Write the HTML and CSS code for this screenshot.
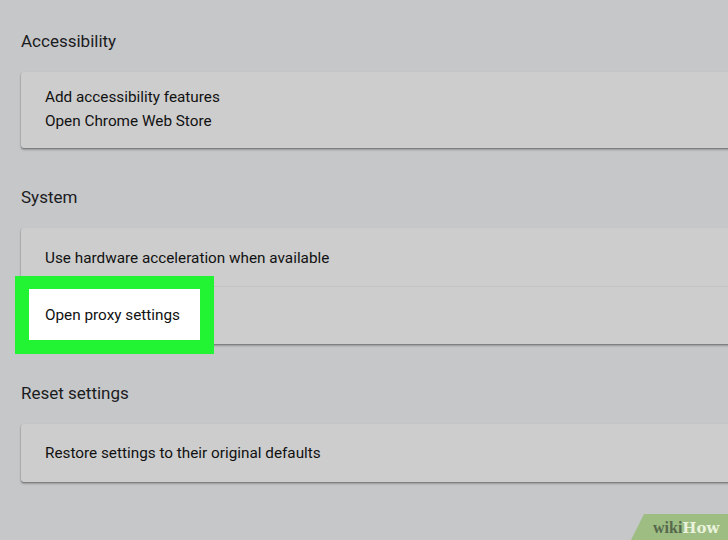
FILE: index.html
```html
<!DOCTYPE html>
<html>
<head>
<meta charset="utf-8">
<link rel="stylesheet" href="styles.css">
</head>
<body>
<main class="page">
  <h2 class="heading">Accessibility</h2>
  <section class="card">
    <div class="row row-double">
      <div class="line">Add accessibility features</div>
      <div class="line">Open Chrome Web Store</div>
    </div>
  </section>

  <h2 class="heading heading-next">System</h2>
  <section class="card">
    <div class="row row-first">Use hardware acceleration when available</div>
    <div class="row row-sep row-highlighted">
      <span class="row-label">Open proxy settings</span>
      <div class="highlight"><span class="highlight-label">Open proxy settings</span></div>
    </div>
  </section>

  <h2 class="heading heading-next">Reset settings</h2>
  <section class="card">
    <div class="row row-first row-last">Restore settings to their original defaults</div>
  </section>
</main>
<div class="wikihow"><span class="wiki">wiki</span><span class="how">How</span></div>
</body>
</html>
```

FILE: styles.css
```css
html, body {
  margin: 0;
  padding: 0;
}
body {
  background: #c6c7c9;
  font-family: Roboto, "Liberation Sans", Arial, sans-serif;
  width: 728px;
  height: 540px;
  overflow: hidden;
  position: relative;
}
.page {
  padding: 31px 0 0 21px;
  margin-right: -20px;
}
.heading {
  margin: 0 0 21px 0;
  font-size: 17px;
  font-weight: 400;
  line-height: 20px;
  color: #1b1c1e;
}
.heading-next {
  margin-top: 39px;
}
.card {
  background: #cdcdcd;
  border-radius: 3px;
  box-shadow: 0 1px 0 #808080, 0 2px 2px rgba(0,0,0,0.25), -1px 0 1px rgba(0,0,0,0.08);
}
.row {
  font-size: 15.3px;
  color: #111111;
  padding-left: 24px;
  line-height: 20px;
}
.row-double {
  padding-top: 13px;
  padding-bottom: 15px;
  height: 48px;
}
.line {
  line-height: 24px;
}
.row-first {
  height: 57px;
  display: flex;
  align-items: center;
  padding-top: 1px;
}
.row-last {
  padding-top: 0;
  padding-bottom: 1px;
}
.row-sep {
  height: 57px;
  display: flex;
  align-items: center;
  border-top: 1px solid #c3c3c3;
}
.row-highlighted {
  position: relative;
}
.highlight {
  position: absolute;
  left: -6px;
  top: -11px;
  width: 171px;
  height: 51px;
  border: 14px solid #22f433;
  border-top-width: 13px;
  background: #ffffff;
  display: flex;
  align-items: center;
  box-sizing: content-box;
}
.highlight-label {
  padding-left: 16px;
  padding-top: 1px;
  font-size: 15.3px;
  color: #111111;
}
.wikihow {
  position: absolute;
  right: 0;
  bottom: 0;
  width: 97px;
  height: 26px;
  background: #9dbd82;
  clip-path: polygon(13px 0, 100% 0, 100% 100%, 0 100%);
  font-weight: 700;
  font-size: 16px;
  line-height: 28px;
  padding-left: 22px;
  box-sizing: border-box;
  white-space: nowrap;
}
.wiki {
  font-family: "Liberation Serif", serif;
  color: #56684c;
}
.how {
  font-family: "DejaVu Serif", serif;
  font-size: 15px;
  color: #eaf2dc;
}
```
